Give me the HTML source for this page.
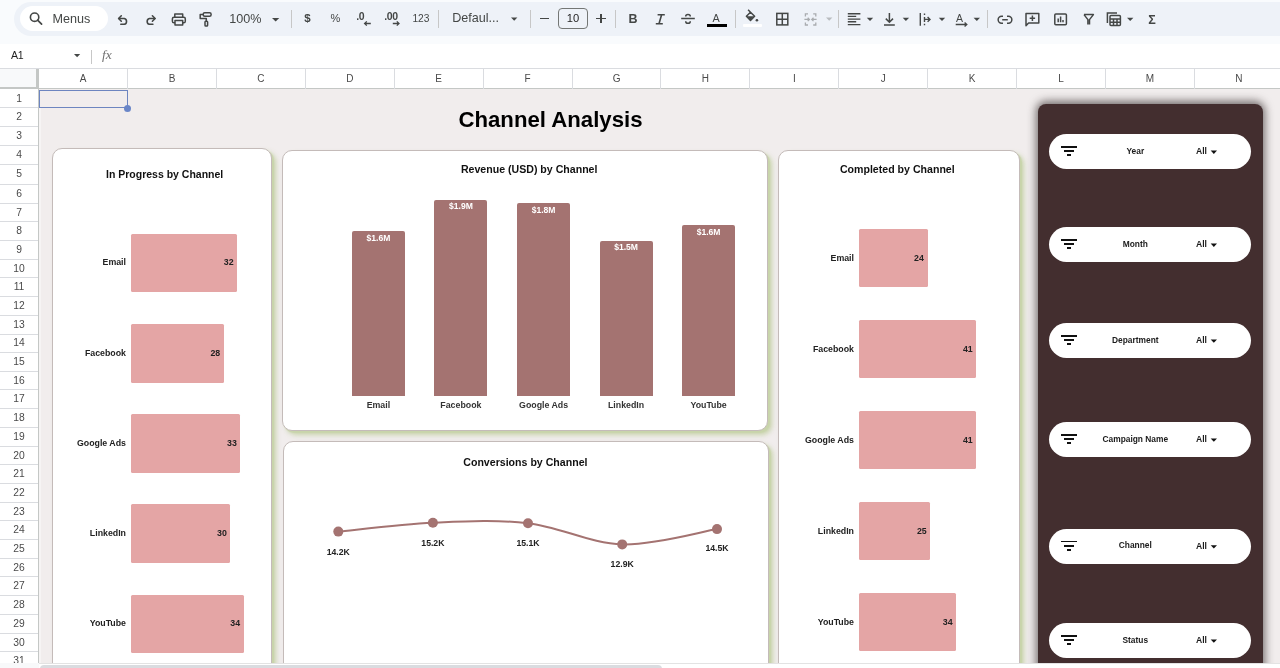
<!DOCTYPE html><html><head><meta charset="utf-8"><style>
*{margin:0;padding:0;box-sizing:border-box}
html,body{width:1280px;height:668px;overflow:hidden;background:#f9fbfd;font-family:"Liberation Sans",sans-serif;position:relative}
body{will-change:transform}
.a{position:absolute}
.t{position:absolute;white-space:nowrap;line-height:1}
svg{position:absolute;overflow:visible}
.card{position:absolute;background:#fff;border:1px solid #c4bbb9;border-radius:10px;box-shadow:2px 2px 1px rgba(200,212,170,.9),4px 4px 5px rgba(190,205,155,.8)}
.bt{position:absolute;white-space:nowrap;line-height:1;font-weight:bold;color:#111}
.bar1{position:absolute;background:#e4a5a5;border-radius:1.5px}
.bar2{position:absolute;background:#a47371;border-radius:2px 2px 0 0}
.pill{position:absolute;left:1048.6px;width:202.4px;height:35.2px;border-radius:17.6px;background:#fff}
</style></head><body>
<div class="a" style="left:13.5px;top:1.6px;width:1300px;height:34.4px;border-radius:17px;background:#eef2f8"></div>
<div class="a" style="left:20px;top:6.4px;width:88px;height:25px;border-radius:12.5px;background:#fff"></div>
<svg style="left:0;top:0" width="1" height="1"><circle cx="34.6" cy="17.2" r="4.2" fill="none" stroke="#444746" stroke-width="1.6"/><path d="M37.6 20.2 L41.6 24.2" stroke="#444746" stroke-width="1.7" stroke-linecap="round"/></svg>
<div class="t" style="left:52.50px;top:12.53px;font-size:12.6px;font-weight:normal;color:#444746;">Menus</div>
<svg style="left:0;top:0" width="1" height="1" fill="none" stroke="#444746" stroke-width="1.6" stroke-linecap="round" stroke-linejoin="round"><path d="M121.3 15.8 L118.6 18.5 L121.3 21.2"/><path d="M118.8 18.5 H124.3 A3 3 0 0 1 124.3 24.3 H120.8"/><path d="M152.4 15.8 L155.1 18.5 L152.4 21.2"/><path d="M154.9 18.5 H149.4 A3 3 0 0 0 149.4 24.3 H152.9"/></svg>
<svg style="left:0;top:0" width="1" height="1" fill="none" stroke="#444746" stroke-width="1.5" stroke-linejoin="round"><path d="M174.8 17.2 V13.9 H182.7 V17.2"/><rect x="172.4" y="17.2" width="12.9" height="5.6" rx="1.6"/><rect x="175" y="20.6" width="7.7" height="4.3" fill="#eef2f8"/></svg>
<svg style="left:0;top:0" width="1" height="1" fill="none" stroke="#444746" stroke-width="1.5" stroke-linejoin="round"><rect x="203.2" y="12.8" width="7.9" height="3.5" rx="1.5"/><path d="M203.2 14.6 H200.2 V18.6 H206.3 V21.2"/><rect x="205" y="21.3" width="2.6" height="4.7" rx="0.8"/></svg>
<div class="t" style="left:229.30px;top:12.53px;font-size:12.6px;font-weight:normal;color:#444746;">100%</div>
<svg style="left:0;top:0" width="1" height="1"><path d="M272 17.9 H279.3 L275.65 21.5 Z" fill="#444746"/></svg>
<div class="a" style="left:291.0px;top:10px;width:1px;height:17.5px;background:#c7c7c7"></div>
<div class="a" style="left:437.7px;top:10px;width:1px;height:17.5px;background:#c7c7c7"></div>
<div class="a" style="left:530.3px;top:10px;width:1px;height:17.5px;background:#c7c7c7"></div>
<div class="a" style="left:615.4px;top:10px;width:1px;height:17.5px;background:#c7c7c7"></div>
<div class="a" style="left:735.1px;top:10px;width:1px;height:17.5px;background:#c7c7c7"></div>
<div class="a" style="left:838.3px;top:10px;width:1px;height:17.5px;background:#c7c7c7"></div>
<div class="a" style="left:987.0px;top:10px;width:1px;height:17.5px;background:#c7c7c7"></div>
<div class="t" style="left:304.20px;top:13.17px;font-size:11.5px;font-weight:bold;color:#444746;">$</div>
<div class="t" style="left:330.60px;top:12.89px;font-size:11px;font-weight:normal;color:#444746;">%</div>
<div class="t" style="left:356.20px;top:10.91px;font-size:10.5px;font-weight:bold;color:#444746;letter-spacing:-0.3px">.0</div>
<svg style="left:0;top:0" width="1" height="1" fill="none" stroke="#444746" stroke-width="1.3"><path d="M370.8 23.5 H364.6 M366.8 21.4 L364.6 23.5 L366.8 25.6"/></svg>
<div class="t" style="left:384.20px;top:10.91px;font-size:10.5px;font-weight:bold;color:#444746;letter-spacing:-0.4px">.00</div>
<svg style="left:0;top:0" width="1" height="1" fill="none" stroke="#444746" stroke-width="1.3"><path d="M392.8 23.5 H399 M396.8 21.4 L399 23.5 L396.8 25.6"/></svg>
<div class="t" style="left:412.40px;top:13.67px;font-size:10.2px;font-weight:normal;color:#444746;">123</div>
<div class="t" style="left:452.20px;top:11.73px;font-size:12.6px;font-weight:normal;color:#444746;">Defaul...</div>
<svg style="left:0;top:0" width="1" height="1"><path d="M511 17.4 H517.4 L514.2 20.7 Z" fill="#444746"/></svg>
<div class="a" style="left:540px;top:18px;width:9.4px;height:1.4px;background:#444746"></div>
<div class="a" style="left:558.4px;top:8.4px;width:29.3px;height:21.1px;border:1px solid #747775;border-radius:4px"></div>
<div class="t" style="left:566.80px;top:12.82px;font-size:11.2px;font-weight:normal;color:#1f1f1f;">10</div>
<div class="a" style="left:596.2px;top:18px;width:9.4px;height:1.4px;background:#444746"></div><div class="a" style="left:600.2px;top:14px;width:1.4px;height:9.4px;background:#444746"></div>
<div class="t" style="left:628.60px;top:13.02px;font-size:12.5px;font-weight:bold;color:#444746;">B</div>
<svg style="left:0;top:0" width="1" height="1" fill="none" stroke="#444746" stroke-width="1.6"><path d="M657.6 14.7 H664.8 M655.8 23.8 H662.8 M661.6 14.7 L659 23.8"/></svg>
<svg style="left:0;top:0" width="1" height="1" fill="none" stroke="#444746" stroke-width="1.5"><path d="M685.7 16.6 Q685.7 14.6 688 14.6 Q690.3 14.6 690.3 16.4 M681.2 18.5 H694.8 M685.7 21.2 Q685.7 23.3 688 23.3 Q690.3 23.3 690.3 21.2"/></svg>
<div class="t" style="left:712.60px;top:12.56px;font-size:10.8px;font-weight:normal;color:#444746;">A</div>
<div class="a" style="left:707.3px;top:23.9px;width:19.6px;height:3.1px;background:#000"></div>
<svg style="left:0;top:0" width="1" height="1"><path d="M746.4 16.3 L750.5 12.2 L754.6 16.3 L750.5 20.4 Z M748.1 9.8 L750.5 12.2" fill="none" stroke="#444746" stroke-width="1.5" stroke-linejoin="round"/><path d="M746.8 16.3 H754.2 L750.5 20 Z" fill="#444746"/><circle cx="756.9" cy="20.3" r="1.3" fill="#444746"/></svg>
<div class="a" style="left:742.7px;top:24px;width:19.8px;height:3px;background:#fff;border-radius:1px"></div>
<svg style="left:0;top:0" width="1" height="1" fill="none" stroke="#444746" stroke-width="1.5"><rect x="776.8" y="13.4" width="11" height="11.5"/><path d="M782.3 13.4 V24.9 M776.8 19.15 H787.8"/></svg>
<svg style="left:0;top:0" width="1" height="1" fill="none" stroke="#a9acaf" stroke-width="1.3"><path d="M808 13.9 H805.4 V16.4 M805.4 22.4 V25 H808 M813.2 13.9 H815.8 V16.4 M815.8 22.4 V25 H813.2 M804.4 19.4 H809.4 M807.7 17.7 L809.4 19.4 L807.7 21.1 M816.6 19.4 H811.8 M813.5 17.7 L811.8 19.4 L813.5 21.1"/></svg>
<svg style="left:0;top:0" width="1" height="1"><path d="M826 17.6 H832.4 L829.2 20.8 Z" fill="#b9bcbf"/></svg>
<svg style="left:0;top:0" width="1" height="1" stroke="#444746" stroke-width="1.4"><path d="M847.8 13.8 H860.4 M847.8 16.4 H856.2 M847.8 19.1 H860.4 M847.8 21.8 H856.2 M847.8 24.6 H860.4"/></svg>
<svg style="left:0;top:0" width="1" height="1"><path d="M866.8 17.8 H873.1999999999999 L870.0 21 Z" fill="#444746"/></svg>
<svg style="left:0;top:0" width="1" height="1"><path d="M902.7 17.8 H909.1 L905.9000000000001 21 Z" fill="#444746"/></svg>
<svg style="left:0;top:0" width="1" height="1"><path d="M938.8 17.8 H945.1999999999999 L942.0 21 Z" fill="#444746"/></svg>
<svg style="left:0;top:0" width="1" height="1"><path d="M973.6 17.8 H980.0 L976.8000000000001 21 Z" fill="#444746"/></svg>
<svg style="left:0;top:0" width="1" height="1"><path d="M1127 17.8 H1133.4 L1130.2 21 Z" fill="#444746"/></svg>
<svg style="left:0;top:0" width="1" height="1" fill="none" stroke="#444746" stroke-width="1.5"><path d="M889.4 13 V22 M885.8 18.6 L889.4 22.2 L893 18.6 M884 25 H894.8"/></svg>
<svg style="left:0;top:0" width="1" height="1" fill="none" stroke="#444746" stroke-width="1.4"><path d="M920.3 13 V25.8 M924.5 13.5 V15 M924.5 23.8 V25.3 M924.5 17 V22 M924.5 19.4 H930 M927.6 17 L930 19.4 L927.6 21.8"/></svg>
<div class="t" style="left:956.00px;top:13.11px;font-size:10.5px;font-weight:normal;color:#444746;">A</div>
<svg style="left:0;top:0" width="1" height="1" fill="none" stroke="#444746" stroke-width="1.3"><path d="M955.7 24.5 H966.5 M964.6 22.6 L966.8 24.5 L964.6 26.4"/></svg>
<svg style="left:0;top:0" width="1" height="1" fill="none" stroke="#444746" stroke-width="1.5"><path d="M1003 16.3 H1001.6 A3.45 3.45 0 0 0 1001.6 23.2 H1003 M1007 16.3 H1008.4 A3.45 3.45 0 0 1 1008.4 23.2 H1007 M1002.2 19.75 H1007.8"/></svg>
<svg style="left:0;top:0" width="1" height="1" fill="none" stroke="#444746" stroke-width="1.5" stroke-linejoin="round"><path d="M1026 13.5 H1038.8 V23 H1028.6 L1026 25.6 Z"/><path d="M1032.4 15.6 V21 M1029.7 18.3 H1035.1"/></svg>
<svg style="left:0;top:0" width="1" height="1" fill="none" stroke="#444746" stroke-width="1.5"><rect x="1054.8" y="14" width="11.6" height="10.8" rx="1"/><path d="M1058.2 18.4 V22.2 M1060.6 16.4 V22.2 M1063 20 V22.2"/></svg>
<svg style="left:0;top:0" width="1" height="1" fill="none" stroke="#444746" stroke-width="1.5" stroke-linejoin="round"><path d="M1084 14.6 H1093.4 L1089.5 19.6 V24.4 M1084 14.6 L1087.9 19.6 V24.4"/></svg>
<svg style="left:0;top:0" width="1" height="1" fill="none" stroke="#444746" stroke-width="1.5"><path d="M1107.4 23 V13 H1117"/><rect x="1110" y="15.6" width="10.4" height="10" rx="1"/><path d="M1110 19 H1120.4 M1110 22.3 H1120.4 M1113.5 19 V25.6 M1117 19 V25.6"/></svg>
<div class="t" style="left:1148.20px;top:14.02px;font-size:12.5px;font-weight:bold;color:#444746;">&Sigma;</div>
<div class="a" style="left:0;top:43.6px;width:1280px;height:24.6px;background:#fff"></div>
<div class="t" style="left:11.00px;top:50.33px;font-size:10.6px;font-weight:normal;color:#1f1f1f;letter-spacing:-0.4px">A1</div>
<svg style="left:0;top:0" width="1" height="1"><path d="M74 54 H80.2 L77.1 57.2 Z" fill="#444746"/></svg>
<div class="a" style="left:91px;top:49.7px;width:1px;height:14.5px;background:#c7c7c7"></div>
<div class="t" style="left:102.00px;top:48.47px;font-size:13.5px;font-weight:normal;color:#707070;font-family:Liberation Serif,serif"><i>fx</i></div>
<div class="a" style="left:0;top:67.8px;width:1280px;height:21.2px;background:#fff;border-top:1px solid #dadce0"></div>
<div class="a" style="left:0;top:68.5px;width:35.5px;height:18.7px;background:#f8f9fa"></div>
<div class="a" style="left:35.5px;top:68.5px;width:3px;height:20.7px;background:#c4c7c5"></div>
<div class="a" style="left:0;top:87.2px;width:38.5px;height:2px;background:#c4c7c5"></div>
<div class="a" style="left:38.5px;top:88.3px;width:1242px;height:0.8px;background:#c4c7c5"></div>
<div class="t" style="left:-216.94px;width:600px;text-align:center;top:73.94px;font-size:10px;font-weight:normal;color:#4a4a4a;">A</div>
<div class="a" style="left:127.01px;top:68.5px;width:1px;height:20px;background:#dadce0"></div>
<div class="t" style="left:-128.04px;width:600px;text-align:center;top:73.94px;font-size:10px;font-weight:normal;color:#4a4a4a;">B</div>
<div class="a" style="left:215.92px;top:68.5px;width:1px;height:20px;background:#dadce0"></div>
<div class="t" style="left:-39.12px;width:600px;text-align:center;top:73.94px;font-size:10px;font-weight:normal;color:#4a4a4a;">C</div>
<div class="a" style="left:304.83px;top:68.5px;width:1px;height:20px;background:#dadce0"></div>
<div class="t" style="left:49.79px;width:600px;text-align:center;top:73.94px;font-size:10px;font-weight:normal;color:#4a4a4a;">D</div>
<div class="a" style="left:393.74px;top:68.5px;width:1px;height:20px;background:#dadce0"></div>
<div class="t" style="left:138.69px;width:600px;text-align:center;top:73.94px;font-size:10px;font-weight:normal;color:#4a4a4a;">E</div>
<div class="a" style="left:482.65px;top:68.5px;width:1px;height:20px;background:#dadce0"></div>
<div class="t" style="left:227.61px;width:600px;text-align:center;top:73.94px;font-size:10px;font-weight:normal;color:#4a4a4a;">F</div>
<div class="a" style="left:571.56px;top:68.5px;width:1px;height:20px;background:#dadce0"></div>
<div class="t" style="left:316.52px;width:600px;text-align:center;top:73.94px;font-size:10px;font-weight:normal;color:#4a4a4a;">G</div>
<div class="a" style="left:660.47px;top:68.5px;width:1px;height:20px;background:#dadce0"></div>
<div class="t" style="left:405.43px;width:600px;text-align:center;top:73.94px;font-size:10px;font-weight:normal;color:#4a4a4a;">H</div>
<div class="a" style="left:749.38px;top:68.5px;width:1px;height:20px;background:#dadce0"></div>
<div class="t" style="left:494.34px;width:600px;text-align:center;top:73.94px;font-size:10px;font-weight:normal;color:#4a4a4a;">I</div>
<div class="a" style="left:838.29px;top:68.5px;width:1px;height:20px;background:#dadce0"></div>
<div class="t" style="left:583.25px;width:600px;text-align:center;top:73.94px;font-size:10px;font-weight:normal;color:#4a4a4a;">J</div>
<div class="a" style="left:927.20px;top:68.5px;width:1px;height:20px;background:#dadce0"></div>
<div class="t" style="left:672.15px;width:600px;text-align:center;top:73.94px;font-size:10px;font-weight:normal;color:#4a4a4a;">K</div>
<div class="a" style="left:1016.11px;top:68.5px;width:1px;height:20px;background:#dadce0"></div>
<div class="t" style="left:761.07px;width:600px;text-align:center;top:73.94px;font-size:10px;font-weight:normal;color:#4a4a4a;">L</div>
<div class="a" style="left:1105.02px;top:68.5px;width:1px;height:20px;background:#dadce0"></div>
<div class="t" style="left:849.97px;width:600px;text-align:center;top:73.94px;font-size:10px;font-weight:normal;color:#4a4a4a;">M</div>
<div class="a" style="left:1193.93px;top:68.5px;width:1px;height:20px;background:#dadce0"></div>
<div class="t" style="left:938.88px;width:600px;text-align:center;top:73.94px;font-size:10px;font-weight:normal;color:#4a4a4a;">N</div>
<div class="a" style="left:0;top:89px;width:38.5px;height:579px;background:#fff"></div>
<div class="a" style="left:38px;top:89px;width:1px;height:579px;background:#c4c7c5"></div>
<div class="a" style="left:0;top:107.30px;width:38px;height:1px;background:#dadce0"></div>
<div class="t" style="left:-281.00px;width:600px;text-align:center;top:93.58px;font-size:10.3px;font-weight:normal;color:#4a4a4a;">1</div>
<div class="a" style="left:0;top:125.60px;width:38px;height:1px;background:#dadce0"></div>
<div class="t" style="left:-281.00px;width:600px;text-align:center;top:112.13px;font-size:10.3px;font-weight:normal;color:#4a4a4a;">2</div>
<div class="a" style="left:0;top:144.80px;width:38px;height:1px;background:#dadce0"></div>
<div class="t" style="left:-281.00px;width:600px;text-align:center;top:130.88px;font-size:10.3px;font-weight:normal;color:#4a4a4a;">3</div>
<div class="a" style="left:0;top:163.80px;width:38px;height:1px;background:#dadce0"></div>
<div class="t" style="left:-281.00px;width:600px;text-align:center;top:149.98px;font-size:10.3px;font-weight:normal;color:#4a4a4a;">4</div>
<div class="a" style="left:0;top:183.50px;width:38px;height:1px;background:#dadce0"></div>
<div class="t" style="left:-281.00px;width:600px;text-align:center;top:169.33px;font-size:10.3px;font-weight:normal;color:#4a4a4a;">5</div>
<div class="a" style="left:0;top:202.60px;width:38px;height:1px;background:#dadce0"></div>
<div class="t" style="left:-281.00px;width:600px;text-align:center;top:188.73px;font-size:10.3px;font-weight:normal;color:#4a4a4a;">6</div>
<div class="a" style="left:0;top:221.30px;width:38px;height:1px;background:#dadce0"></div>
<div class="t" style="left:-281.00px;width:600px;text-align:center;top:207.63px;font-size:10.3px;font-weight:normal;color:#4a4a4a;">7</div>
<div class="a" style="left:0;top:240.10px;width:38px;height:1px;background:#dadce0"></div>
<div class="t" style="left:-281.00px;width:600px;text-align:center;top:226.38px;font-size:10.3px;font-weight:normal;color:#4a4a4a;">8</div>
<div class="a" style="left:0;top:258.80px;width:38px;height:1px;background:#dadce0"></div>
<div class="t" style="left:-281.00px;width:600px;text-align:center;top:245.13px;font-size:10.3px;font-weight:normal;color:#4a4a4a;">9</div>
<div class="a" style="left:0;top:277.30px;width:38px;height:1px;background:#dadce0"></div>
<div class="t" style="left:-281.00px;width:600px;text-align:center;top:263.73px;font-size:10.3px;font-weight:normal;color:#4a4a4a;">10</div>
<div class="a" style="left:0;top:296.10px;width:38px;height:1px;background:#dadce0"></div>
<div class="t" style="left:-281.00px;width:600px;text-align:center;top:282.38px;font-size:10.3px;font-weight:normal;color:#4a4a4a;">11</div>
<div class="a" style="left:0;top:314.90px;width:38px;height:1px;background:#dadce0"></div>
<div class="t" style="left:-281.00px;width:600px;text-align:center;top:301.18px;font-size:10.3px;font-weight:normal;color:#4a4a4a;">12</div>
<div class="a" style="left:0;top:333.50px;width:38px;height:1px;background:#dadce0"></div>
<div class="t" style="left:-281.00px;width:600px;text-align:center;top:319.88px;font-size:10.3px;font-weight:normal;color:#4a4a4a;">13</div>
<div class="a" style="left:0;top:351.80px;width:38px;height:1px;background:#dadce0"></div>
<div class="t" style="left:-281.00px;width:600px;text-align:center;top:338.33px;font-size:10.3px;font-weight:normal;color:#4a4a4a;">14</div>
<div class="a" style="left:0;top:370.54px;width:38px;height:1px;background:#dadce0"></div>
<div class="t" style="left:-281.00px;width:600px;text-align:center;top:356.85px;font-size:10.3px;font-weight:normal;color:#4a4a4a;">15</div>
<div class="a" style="left:0;top:389.28px;width:38px;height:1px;background:#dadce0"></div>
<div class="t" style="left:-281.00px;width:600px;text-align:center;top:375.59px;font-size:10.3px;font-weight:normal;color:#4a4a4a;">16</div>
<div class="a" style="left:0;top:408.02px;width:38px;height:1px;background:#dadce0"></div>
<div class="t" style="left:-281.00px;width:600px;text-align:center;top:394.33px;font-size:10.3px;font-weight:normal;color:#4a4a4a;">17</div>
<div class="a" style="left:0;top:426.76px;width:38px;height:1px;background:#dadce0"></div>
<div class="t" style="left:-281.00px;width:600px;text-align:center;top:413.07px;font-size:10.3px;font-weight:normal;color:#4a4a4a;">18</div>
<div class="a" style="left:0;top:445.50px;width:38px;height:1px;background:#dadce0"></div>
<div class="t" style="left:-281.00px;width:600px;text-align:center;top:431.81px;font-size:10.3px;font-weight:normal;color:#4a4a4a;">19</div>
<div class="a" style="left:0;top:464.30px;width:38px;height:1px;background:#dadce0"></div>
<div class="t" style="left:-281.00px;width:600px;text-align:center;top:450.58px;font-size:10.3px;font-weight:normal;color:#4a4a4a;">20</div>
<div class="a" style="left:0;top:482.90px;width:38px;height:1px;background:#dadce0"></div>
<div class="t" style="left:-281.00px;width:600px;text-align:center;top:469.28px;font-size:10.3px;font-weight:normal;color:#4a4a4a;">21</div>
<div class="a" style="left:0;top:501.80px;width:38px;height:1px;background:#dadce0"></div>
<div class="t" style="left:-281.00px;width:600px;text-align:center;top:488.03px;font-size:10.3px;font-weight:normal;color:#4a4a4a;">22</div>
<div class="a" style="left:0;top:520.46px;width:38px;height:1px;background:#dadce0"></div>
<div class="t" style="left:-281.00px;width:600px;text-align:center;top:506.81px;font-size:10.3px;font-weight:normal;color:#4a4a4a;">23</div>
<div class="a" style="left:0;top:539.12px;width:38px;height:1px;background:#dadce0"></div>
<div class="t" style="left:-281.00px;width:600px;text-align:center;top:525.47px;font-size:10.3px;font-weight:normal;color:#4a4a4a;">24</div>
<div class="a" style="left:0;top:557.78px;width:38px;height:1px;background:#dadce0"></div>
<div class="t" style="left:-281.00px;width:600px;text-align:center;top:544.13px;font-size:10.3px;font-weight:normal;color:#4a4a4a;">25</div>
<div class="a" style="left:0;top:576.44px;width:38px;height:1px;background:#dadce0"></div>
<div class="t" style="left:-281.00px;width:600px;text-align:center;top:562.79px;font-size:10.3px;font-weight:normal;color:#4a4a4a;">26</div>
<div class="a" style="left:0;top:595.10px;width:38px;height:1px;background:#dadce0"></div>
<div class="t" style="left:-281.00px;width:600px;text-align:center;top:581.45px;font-size:10.3px;font-weight:normal;color:#4a4a4a;">27</div>
<div class="a" style="left:0;top:613.90px;width:38px;height:1px;background:#dadce0"></div>
<div class="t" style="left:-281.00px;width:600px;text-align:center;top:600.18px;font-size:10.3px;font-weight:normal;color:#4a4a4a;">28</div>
<div class="a" style="left:0;top:632.60px;width:38px;height:1px;background:#dadce0"></div>
<div class="t" style="left:-281.00px;width:600px;text-align:center;top:618.93px;font-size:10.3px;font-weight:normal;color:#4a4a4a;">29</div>
<div class="a" style="left:0;top:651.40px;width:38px;height:1px;background:#dadce0"></div>
<div class="t" style="left:-281.00px;width:600px;text-align:center;top:637.68px;font-size:10.3px;font-weight:normal;color:#4a4a4a;">30</div>
<div class="a" style="left:0;top:670.10px;width:38px;height:1px;background:#dadce0"></div>
<div class="t" style="left:-281.00px;width:600px;text-align:center;top:656.43px;font-size:10.3px;font-weight:normal;color:#4a4a4a;">31</div>
<div class="a" style="left:39px;top:89.2px;width:1241px;height:574px;background:#f1eded"></div>
<div class="a" style="left:39px;top:108px;width:2px;height:555px;background:#f6f4f4"></div>
<div class="a" style="left:39px;top:89.5px;width:89px;height:18.5px;border:1.8px solid #6d85c0;"></div>
<div class="a" style="left:124px;top:105.2px;width:7px;height:7px;border-radius:50%;background:#6a86c8"></div>
<div class="card" style="left:52.2px;top:148.2px;width:219.6px;height:560px"></div>
<div class="card" style="left:282.2px;top:149.6px;width:486.2px;height:281px"></div>
<div class="card" style="left:282.8px;top:441.2px;width:486.5px;height:300px"></div>
<div class="card" style="left:778.2px;top:149.7px;width:241.5px;height:560px"></div>
<div class="t" style="left:250.50px;width:600px;text-align:center;top:109.01px;font-size:22.2px;font-weight:bold;color:#000;">Channel Analysis</div>
<div class="t" style="left:-135.40px;width:600px;text-align:center;top:169.01px;font-size:10.5px;font-weight:bold;color:#111;">In Progress by Channel</div>
<div class="bar1" style="left:131px;top:233.50px;width:106.02px;height:58.8px"></div>
<div class="t" style="left:-474.00px;width:600px;text-align:right;top:258.25px;font-size:8.8px;font-weight:bold;color:#222;">Email</div>
<div class="t" style="left:-366.48px;width:600px;text-align:right;top:258.25px;font-size:8.8px;font-weight:bold;color:#222;">32</div>
<div class="bar1" style="left:131px;top:323.80px;width:92.76px;height:58.8px"></div>
<div class="t" style="left:-474.00px;width:600px;text-align:right;top:348.55px;font-size:8.8px;font-weight:bold;color:#222;">Facebook</div>
<div class="t" style="left:-379.74px;width:600px;text-align:right;top:348.55px;font-size:8.8px;font-weight:bold;color:#222;">28</div>
<div class="bar1" style="left:131px;top:414.10px;width:109.33px;height:58.8px"></div>
<div class="t" style="left:-474.00px;width:600px;text-align:right;top:438.85px;font-size:8.8px;font-weight:bold;color:#222;">Google Ads</div>
<div class="t" style="left:-363.17px;width:600px;text-align:right;top:438.85px;font-size:8.8px;font-weight:bold;color:#222;">33</div>
<div class="bar1" style="left:131px;top:504.40px;width:99.39px;height:58.8px"></div>
<div class="t" style="left:-474.00px;width:600px;text-align:right;top:529.15px;font-size:8.8px;font-weight:bold;color:#222;">LinkedIn</div>
<div class="t" style="left:-373.11px;width:600px;text-align:right;top:529.15px;font-size:8.8px;font-weight:bold;color:#222;">30</div>
<div class="bar1" style="left:131px;top:594.70px;width:112.64px;height:58.8px"></div>
<div class="t" style="left:-474.00px;width:600px;text-align:right;top:619.45px;font-size:8.8px;font-weight:bold;color:#222;">YouTube</div>
<div class="t" style="left:-359.86px;width:600px;text-align:right;top:619.45px;font-size:8.8px;font-weight:bold;color:#222;">34</div>
<div class="t" style="left:597.30px;width:600px;text-align:center;top:164.23px;font-size:10.6px;font-weight:bold;color:#111;">Completed by Channel</div>
<div class="bar1" style="left:858.6px;top:229.30px;width:69.00px;height:58px"></div>
<div class="t" style="left:254.00px;width:600px;text-align:right;top:254.05px;font-size:8.8px;font-weight:bold;color:#222;">Email</div>
<div class="t" style="left:323.80px;width:600px;text-align:right;top:254.05px;font-size:8.8px;font-weight:bold;color:#222;">24</div>
<div class="bar1" style="left:858.6px;top:320.25px;width:117.88px;height:58px"></div>
<div class="t" style="left:254.00px;width:600px;text-align:right;top:345.00px;font-size:8.8px;font-weight:bold;color:#222;">Facebook</div>
<div class="t" style="left:372.68px;width:600px;text-align:right;top:345.00px;font-size:8.8px;font-weight:bold;color:#222;">41</div>
<div class="bar1" style="left:858.6px;top:411.20px;width:117.88px;height:58px"></div>
<div class="t" style="left:254.00px;width:600px;text-align:right;top:435.95px;font-size:8.8px;font-weight:bold;color:#222;">Google Ads</div>
<div class="t" style="left:372.68px;width:600px;text-align:right;top:435.95px;font-size:8.8px;font-weight:bold;color:#222;">41</div>
<div class="bar1" style="left:858.6px;top:502.15px;width:71.88px;height:58px"></div>
<div class="t" style="left:254.00px;width:600px;text-align:right;top:526.90px;font-size:8.8px;font-weight:bold;color:#222;">LinkedIn</div>
<div class="t" style="left:326.68px;width:600px;text-align:right;top:526.90px;font-size:8.8px;font-weight:bold;color:#222;">25</div>
<div class="bar1" style="left:858.6px;top:593.10px;width:97.75px;height:58px"></div>
<div class="t" style="left:254.00px;width:600px;text-align:right;top:617.85px;font-size:8.8px;font-weight:bold;color:#222;">YouTube</div>
<div class="t" style="left:352.55px;width:600px;text-align:right;top:617.85px;font-size:8.8px;font-weight:bold;color:#222;">34</div>
<div class="t" style="left:229.20px;width:600px;text-align:center;top:163.93px;font-size:10.6px;font-weight:bold;color:#111;">Revenue (USD) by Channel</div>
<div class="bar2" style="left:351.90px;top:231.25px;width:53px;height:164.55px"></div>
<div class="t" style="left:78.40px;width:600px;text-align:center;top:233.67px;font-size:8.6px;font-weight:bold;color:#fff;">$1.6M</div>
<div class="t" style="left:78.40px;width:600px;text-align:center;top:400.95px;font-size:8.8px;font-weight:bold;color:#333;">Email</div>
<div class="bar2" style="left:434.40px;top:199.70px;width:53px;height:196.10px"></div>
<div class="t" style="left:160.90px;width:600px;text-align:center;top:202.12px;font-size:8.6px;font-weight:bold;color:#fff;">$1.9M</div>
<div class="t" style="left:160.90px;width:600px;text-align:center;top:400.95px;font-size:8.8px;font-weight:bold;color:#333;">Facebook</div>
<div class="bar2" style="left:517.10px;top:203.40px;width:53px;height:192.40px"></div>
<div class="t" style="left:243.60px;width:600px;text-align:center;top:205.82px;font-size:8.6px;font-weight:bold;color:#fff;">$1.8M</div>
<div class="t" style="left:243.60px;width:600px;text-align:center;top:400.95px;font-size:8.8px;font-weight:bold;color:#333;">Google Ads</div>
<div class="bar2" style="left:599.60px;top:240.50px;width:53px;height:155.30px"></div>
<div class="t" style="left:326.10px;width:600px;text-align:center;top:242.92px;font-size:8.6px;font-weight:bold;color:#fff;">$1.5M</div>
<div class="t" style="left:326.10px;width:600px;text-align:center;top:400.95px;font-size:8.8px;font-weight:bold;color:#333;">LinkedIn</div>
<div class="bar2" style="left:682.10px;top:225.30px;width:53px;height:170.50px"></div>
<div class="t" style="left:408.60px;width:600px;text-align:center;top:227.72px;font-size:8.6px;font-weight:bold;color:#fff;">$1.6M</div>
<div class="t" style="left:408.60px;width:600px;text-align:center;top:400.95px;font-size:8.8px;font-weight:bold;color:#333;">YouTube</div>
<div class="t" style="left:225.40px;width:600px;text-align:center;top:457.23px;font-size:10.6px;font-weight:bold;color:#111;">Conversions by Channel</div>
<svg style="left:0;top:0" width="1" height="1"><path d="M338.3 531.6 C354.07 530.13 401.28 524.20 432.9 522.8 C464.52 521.40 496.45 519.60 528 523.2 C559.55 526.80 590.70 543.42 622.2 544.4 C653.70 545.38 701.20 531.65 717 529.1" fill="none" stroke="#a47371" stroke-width="2"/><circle cx="338.3" cy="531.6" r="5" fill="#a47371"/><circle cx="432.9" cy="522.8" r="5" fill="#a47371"/><circle cx="528" cy="523.2" r="5" fill="#a47371"/><circle cx="622.2" cy="544.4" r="5" fill="#a47371"/><circle cx="717" cy="529.1" r="5" fill="#a47371"/></svg>
<div class="t" style="left:38.30px;width:600px;text-align:center;top:547.94px;font-size:8.7px;font-weight:bold;color:#222;">14.2K</div>
<div class="t" style="left:132.90px;width:600px;text-align:center;top:538.54px;font-size:8.7px;font-weight:bold;color:#222;">15.2K</div>
<div class="t" style="left:228.00px;width:600px;text-align:center;top:539.14px;font-size:8.7px;font-weight:bold;color:#222;">15.1K</div>
<div class="t" style="left:322.20px;width:600px;text-align:center;top:560.14px;font-size:8.7px;font-weight:bold;color:#222;">12.9K</div>
<div class="t" style="left:417.00px;width:600px;text-align:center;top:544.14px;font-size:8.7px;font-weight:bold;color:#222;">14.5K</div>
<div class="a" style="left:1038px;top:104.2px;width:225px;height:600px;background:#432e2f;border-radius:8px;box-shadow:0 -1px 8px 2px rgba(40,30,30,.62)"></div>
<div class="pill" style="top:134.20px"></div>
<div class="a" style="left:1060.6px;top:146.00px;width:16.4px;height:1.8px;background:#111"></div>
<div class="a" style="left:1063.9px;top:150.10px;width:9.8px;height:1.8px;background:#111"></div>
<div class="a" style="left:1067.1px;top:154.20px;width:3.8px;height:1.8px;background:#111"></div>
<div class="t" style="left:835.30px;width:600px;text-align:center;top:146.69px;font-size:8.4px;font-weight:bold;color:#1b1b1b;">Year</div>
<div class="t" style="left:1196.00px;top:147.42px;font-size:8.6px;font-weight:bold;color:#1b1b1b;">All</div>
<svg style="left:0;top:0" width="1" height="1"><path d="M1210.7 150.60 H1217 L1213.85 153.90 Z" fill="#111"/></svg>
<div class="pill" style="top:227.20px"></div>
<div class="a" style="left:1060.6px;top:239.00px;width:16.4px;height:1.8px;background:#111"></div>
<div class="a" style="left:1063.9px;top:243.10px;width:9.8px;height:1.8px;background:#111"></div>
<div class="a" style="left:1067.1px;top:247.20px;width:3.8px;height:1.8px;background:#111"></div>
<div class="t" style="left:835.30px;width:600px;text-align:center;top:239.69px;font-size:8.4px;font-weight:bold;color:#1b1b1b;">Month</div>
<div class="t" style="left:1196.00px;top:240.42px;font-size:8.6px;font-weight:bold;color:#1b1b1b;">All</div>
<svg style="left:0;top:0" width="1" height="1"><path d="M1210.7 243.60 H1217 L1213.85 246.90 Z" fill="#111"/></svg>
<div class="pill" style="top:323.10px"></div>
<div class="a" style="left:1060.6px;top:334.90px;width:16.4px;height:1.8px;background:#111"></div>
<div class="a" style="left:1063.9px;top:339.00px;width:9.8px;height:1.8px;background:#111"></div>
<div class="a" style="left:1067.1px;top:343.10px;width:3.8px;height:1.8px;background:#111"></div>
<div class="t" style="left:835.30px;width:600px;text-align:center;top:335.59px;font-size:8.4px;font-weight:bold;color:#1b1b1b;">Department</div>
<div class="t" style="left:1196.00px;top:336.32px;font-size:8.6px;font-weight:bold;color:#1b1b1b;">All</div>
<svg style="left:0;top:0" width="1" height="1"><path d="M1210.7 339.50 H1217 L1213.85 342.80 Z" fill="#111"/></svg>
<div class="pill" style="top:422.10px"></div>
<div class="a" style="left:1060.6px;top:433.90px;width:16.4px;height:1.8px;background:#111"></div>
<div class="a" style="left:1063.9px;top:438.00px;width:9.8px;height:1.8px;background:#111"></div>
<div class="a" style="left:1067.1px;top:442.10px;width:3.8px;height:1.8px;background:#111"></div>
<div class="t" style="left:835.30px;width:600px;text-align:center;top:434.59px;font-size:8.4px;font-weight:bold;color:#1b1b1b;">Campaign Name</div>
<div class="t" style="left:1196.00px;top:435.32px;font-size:8.6px;font-weight:bold;color:#1b1b1b;">All</div>
<svg style="left:0;top:0" width="1" height="1"><path d="M1210.7 438.50 H1217 L1213.85 441.80 Z" fill="#111"/></svg>
<div class="pill" style="top:528.90px"></div>
<div class="a" style="left:1060.6px;top:540.70px;width:16.4px;height:1.8px;background:#111"></div>
<div class="a" style="left:1063.9px;top:544.80px;width:9.8px;height:1.8px;background:#111"></div>
<div class="a" style="left:1067.1px;top:548.90px;width:3.8px;height:1.8px;background:#111"></div>
<div class="t" style="left:835.30px;width:600px;text-align:center;top:541.39px;font-size:8.4px;font-weight:bold;color:#1b1b1b;">Channel</div>
<div class="t" style="left:1196.00px;top:542.12px;font-size:8.6px;font-weight:bold;color:#1b1b1b;">All</div>
<svg style="left:0;top:0" width="1" height="1"><path d="M1210.7 545.30 H1217 L1213.85 548.60 Z" fill="#111"/></svg>
<div class="pill" style="top:623.10px"></div>
<div class="a" style="left:1060.6px;top:634.90px;width:16.4px;height:1.8px;background:#111"></div>
<div class="a" style="left:1063.9px;top:639.00px;width:9.8px;height:1.8px;background:#111"></div>
<div class="a" style="left:1067.1px;top:643.10px;width:3.8px;height:1.8px;background:#111"></div>
<div class="t" style="left:835.30px;width:600px;text-align:center;top:635.59px;font-size:8.4px;font-weight:bold;color:#1b1b1b;">Status</div>
<div class="t" style="left:1196.00px;top:636.32px;font-size:8.6px;font-weight:bold;color:#1b1b1b;">All</div>
<svg style="left:0;top:0" width="1" height="1"><path d="M1210.7 639.50 H1217 L1213.85 642.80 Z" fill="#111"/></svg>
<div class="a" style="left:38.5px;top:663px;width:1242px;height:5px;background:#fff;border-top:1px solid #e3e3e3"></div>
<div class="a" style="left:40px;top:664.6px;width:622px;height:8px;border-radius:4px;background:#dadce0"></div>
<div class="a" style="left:0;top:663px;width:38.5px;height:5px;background:#f8f9fa"></div>
</body></html>
